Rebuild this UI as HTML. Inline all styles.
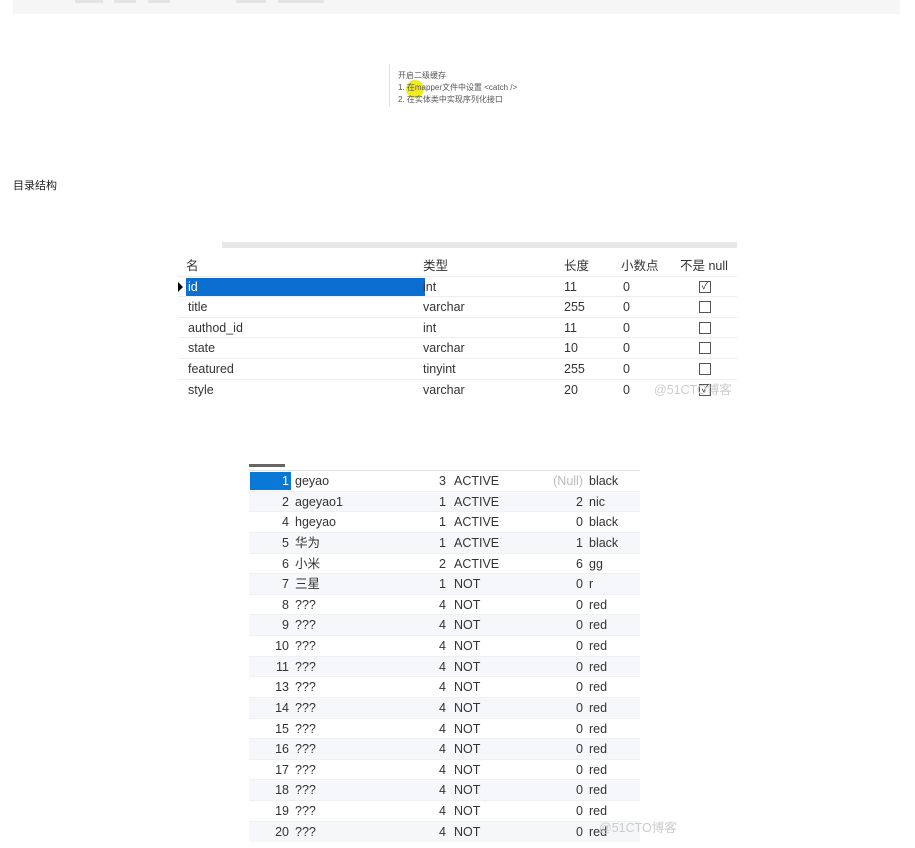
<!DOCTYPE html>
<html><head><meta charset="utf-8"><style>
*{margin:0;padding:0;box-sizing:border-box}
body{width:915px;height:848px;background:#fff;position:relative;overflow:hidden;font-family:"Liberation Sans","Noto Sans CJK SC",sans-serif;color:#333}
.a{position:absolute;white-space:nowrap}
.t1{position:absolute;left:178px;top:256px;width:559px;font-size:12.5px}
.t1 .r{position:relative;height:20.6px;border-bottom:1px solid #eee}
.c{position:absolute;top:3px;line-height:15px;white-space:nowrap}
.cb{position:absolute;left:521px;top:4px;width:12px;height:12px;border:1px solid #555;background:#fff;font-size:10px;line-height:10px;text-align:center}
.t2{position:absolute;left:249px;top:471px;width:391px;font-size:12.5px}
.t2 .r{position:relative;height:20.63px;border-bottom:1px solid #eef0f3}
.t2 .r.l{background:#f5f7fa}
</style></head><body>
<div class="a" style="left:13px;top:0;width:887px;height:14px;background:#f6f6f6"></div>
<div class="a" style="left:75px;top:0;width:28px;height:3px;background:#e4e4e4"></div>
<div class="a" style="left:114px;top:0;width:22px;height:3px;background:#e4e4e4"></div>
<div class="a" style="left:148px;top:0;width:22px;height:3px;background:#e4e4e4"></div>
<div class="a" style="left:236px;top:0;width:30px;height:3px;background:#e4e4e4"></div>
<div class="a" style="left:278px;top:0;width:46px;height:3px;background:#e4e4e4"></div>

<div class="a" style="left:389px;top:64px;width:1px;height:42px;background:#ddd"></div>
<div class="a" style="left:406px;top:80px;width:18px;height:18px;border-radius:50%;background:#f0ec20"></div>
<div class="a" style="left:398px;top:70px;font-size:8px;line-height:12px;color:#555">开启二级缓存<br>1. 在mapper文件中设置 &lt;catch /&gt;<br>2. 在实体类中实现序列化接口</div>

<div class="a" style="left:13px;top:177px;font-size:11px;color:#222">目录结构</div>

<div class="a" style="left:222px;top:242px;width:515px;height:6px;background:#e8e8e8"></div>
<div class="t1">
<div class="r"><span class="c" style="left:8px">名</span><span class="c" style="left:245px">类型</span><span class="c" style="left:386px">长度</span><span class="c" style="left:443px">小数点</span><span class="c" style="left:502px">不是 null</span></div>
<div class="r"><div class="a" style="left:8px;top:1px;width:239px;height:18px;background:#0a6fd0"></div><div class="a" style="left:0;top:5px;width:0;height:0;border-top:5px solid transparent;border-bottom:5px solid transparent;border-left:5px solid #000"></div><span class="c" style="left:10px;color:#fff">id</span><span class="c" style="left:245px">int</span><span class="c" style="left:386px">11</span><span class="c" style="left:445px">0</span><span class="cb">✓</span></div>
<div class="r"><span class="c" style="left:10px">title</span><span class="c" style="left:245px">varchar</span><span class="c" style="left:386px">255</span><span class="c" style="left:445px">0</span><span class="cb"></span></div>
<div class="r"><span class="c" style="left:10px">authod_id</span><span class="c" style="left:245px">int</span><span class="c" style="left:386px">11</span><span class="c" style="left:445px">0</span><span class="cb"></span></div>
<div class="r"><span class="c" style="left:10px">state</span><span class="c" style="left:245px">varchar</span><span class="c" style="left:386px">10</span><span class="c" style="left:445px">0</span><span class="cb"></span></div>
<div class="r"><span class="c" style="left:10px">featured</span><span class="c" style="left:245px">tinyint</span><span class="c" style="left:386px">255</span><span class="c" style="left:445px">0</span><span class="cb"></span></div>
<div class="r" style="border:0"><span class="c" style="left:10px">style</span><span class="c" style="left:245px">varchar</span><span class="c" style="left:386px">20</span><span class="c" style="left:445px">0</span><span class="cb">✓</span><span class="c" style="left:476px;color:#ccc">@51CTO博客</span></div>
</div>

<div class="a" style="left:249px;top:462px;width:391px;height:9px;border-bottom:1px solid #e0e0e0"></div>
<div class="a" style="left:249px;top:464px;width:36px;height:3px;background:#666"></div>
<div class="t2">
<div class="r"><div class="a" style="left:1px;top:1px;width:41px;height:18px;background:#0a78d7"></div><span class="c" style="right:351px;color:#fff">1</span><span class="c" style="left:46px">geyao</span><span class="c" style="right:194px">3</span><span class="c" style="left:205px">ACTIVE</span><span class="c" style="right:57px;color:#bbb">(Null)</span><span class="c" style="left:340px">black</span></div>
<div class="r l"><span class="c" style="right:351px">2</span><span class="c" style="left:46px">ageyao1</span><span class="c" style="right:194px">1</span><span class="c" style="left:205px">ACTIVE</span><span class="c" style="right:57px">2</span><span class="c" style="left:340px">nic</span></div>
<div class="r"><span class="c" style="right:351px">4</span><span class="c" style="left:46px">hgeyao</span><span class="c" style="right:194px">1</span><span class="c" style="left:205px">ACTIVE</span><span class="c" style="right:57px">0</span><span class="c" style="left:340px">black</span></div>
<div class="r l"><span class="c" style="right:351px">5</span><span class="c" style="left:46px">华为</span><span class="c" style="right:194px">1</span><span class="c" style="left:205px">ACTIVE</span><span class="c" style="right:57px">1</span><span class="c" style="left:340px">black</span></div>
<div class="r"><span class="c" style="right:351px">6</span><span class="c" style="left:46px">小米</span><span class="c" style="right:194px">2</span><span class="c" style="left:205px">ACTIVE</span><span class="c" style="right:57px">6</span><span class="c" style="left:340px">gg</span></div>
<div class="r l"><span class="c" style="right:351px">7</span><span class="c" style="left:46px">三星</span><span class="c" style="right:194px">1</span><span class="c" style="left:205px">NOT</span><span class="c" style="right:57px">0</span><span class="c" style="left:340px">r</span></div>
<div class="r"><span class="c" style="right:351px">8</span><span class="c" style="left:46px">???</span><span class="c" style="right:194px">4</span><span class="c" style="left:205px">NOT</span><span class="c" style="right:57px">0</span><span class="c" style="left:340px">red</span></div>
<div class="r l"><span class="c" style="right:351px">9</span><span class="c" style="left:46px">???</span><span class="c" style="right:194px">4</span><span class="c" style="left:205px">NOT</span><span class="c" style="right:57px">0</span><span class="c" style="left:340px">red</span></div>
<div class="r"><span class="c" style="right:351px">10</span><span class="c" style="left:46px">???</span><span class="c" style="right:194px">4</span><span class="c" style="left:205px">NOT</span><span class="c" style="right:57px">0</span><span class="c" style="left:340px">red</span></div>
<div class="r l"><span class="c" style="right:351px">11</span><span class="c" style="left:46px">???</span><span class="c" style="right:194px">4</span><span class="c" style="left:205px">NOT</span><span class="c" style="right:57px">0</span><span class="c" style="left:340px">red</span></div>
<div class="r"><span class="c" style="right:351px">13</span><span class="c" style="left:46px">???</span><span class="c" style="right:194px">4</span><span class="c" style="left:205px">NOT</span><span class="c" style="right:57px">0</span><span class="c" style="left:340px">red</span></div>
<div class="r l"><span class="c" style="right:351px">14</span><span class="c" style="left:46px">???</span><span class="c" style="right:194px">4</span><span class="c" style="left:205px">NOT</span><span class="c" style="right:57px">0</span><span class="c" style="left:340px">red</span></div>
<div class="r"><span class="c" style="right:351px">15</span><span class="c" style="left:46px">???</span><span class="c" style="right:194px">4</span><span class="c" style="left:205px">NOT</span><span class="c" style="right:57px">0</span><span class="c" style="left:340px">red</span></div>
<div class="r l"><span class="c" style="right:351px">16</span><span class="c" style="left:46px">???</span><span class="c" style="right:194px">4</span><span class="c" style="left:205px">NOT</span><span class="c" style="right:57px">0</span><span class="c" style="left:340px">red</span></div>
<div class="r"><span class="c" style="right:351px">17</span><span class="c" style="left:46px">???</span><span class="c" style="right:194px">4</span><span class="c" style="left:205px">NOT</span><span class="c" style="right:57px">0</span><span class="c" style="left:340px">red</span></div>
<div class="r l"><span class="c" style="right:351px">18</span><span class="c" style="left:46px">???</span><span class="c" style="right:194px">4</span><span class="c" style="left:205px">NOT</span><span class="c" style="right:57px">0</span><span class="c" style="left:340px">red</span></div>
<div class="r"><span class="c" style="right:351px">19</span><span class="c" style="left:46px">???</span><span class="c" style="right:194px">4</span><span class="c" style="left:205px">NOT</span><span class="c" style="right:57px">0</span><span class="c" style="left:340px">red</span></div>
<div class="r l" style="border:0"><span class="c" style="right:351px">20</span><span class="c" style="left:46px">???</span><span class="c" style="right:194px">4</span><span class="c" style="left:205px">NOT</span><span class="c" style="right:57px">0</span><span class="c" style="left:340px">red</span><span class="c" style="left:350px;top:-1px;color:#ccc">@51CTO博客</span></div>
</div>
</body></html>
